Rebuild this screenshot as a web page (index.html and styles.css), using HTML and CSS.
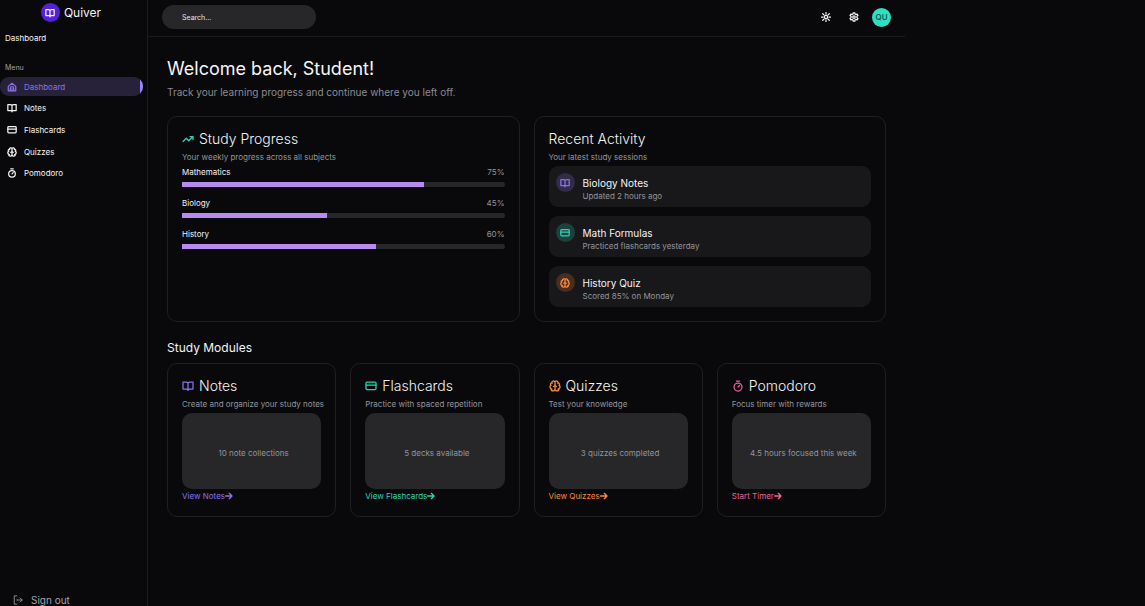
FILE: index.html
```html
<!DOCTYPE html>
<html lang="en">
<head>
<meta charset="utf-8">
<meta name="viewport" content="width=device-width, initial-scale=1">
<title>Quiver</title>
<link rel="stylesheet" href="styles.css">
</head>
<body>
<svg class="sprite" aria-hidden="true">
  <symbol id="book" viewBox="0 0 24 24"><path d="M12 6v15M12 6c-1-1.600-2.500-2-4-2H2v14h7c1.500 0 2.500.8 3 2 .5-1.200 1.500-2 3-2h7V4h-6c-1.500 0-3 .4-4 2z"/></symbol>
  <symbol id="card" viewBox="0 0 24 24"><rect x="2" y="4" width="20" height="15" rx="2"/><path d="M2 10h20"/></symbol>
  <symbol id="brain" viewBox="0 0 24 24"><path d="M12 18V5M15 13a4.170 4.170 0 0 1-3-4 4.170 4.170 0 0 1-3 4M17.600 6.500A3 3 0 1 0 12 5a3 3 0 1 0-5.600 1.500M18 5.125a4 4 0 0 1 2.520 5.770M18 18a4 4 0 0 0 2-7.460M19.970 17.480A4 4 0 1 1 12 18a4 4 0 1 1-7.970-.52M6 18a4 4 0 0 1-2-7.460M6 5.125a4 4 0 0 0-2.520 5.770"/></symbol>
  <symbol id="timer" viewBox="0 0 24 24"><path d="M9 2h6M12 14l3-3"/><circle cx="12" cy="14" r="8"/></symbol>
  <symbol id="home" viewBox="0 0 24 24"><path d="M3 10.500 12 3l9 7.500V21H3zM8 21v-6a4 4 0 0 1 8 0v6M12 16v5"/></symbol>
  <symbol id="trend" viewBox="0 0 24 24"><path d="m2 17 6.500-6.500 5 5L22 7M16 7h6v6"/></symbol>
  <symbol id="arrow" viewBox="0 0 24 24"><path d="M2 12h19M13 4l8 8-8 8"/></symbol>
  <symbol id="exit" viewBox="0 0 24 24"><path d="M9 2H3v20h6M9 12h13M17 7l5 5-5 5"/></symbol>
  <symbol id="sun" viewBox="0 0 24 24"><circle cx="12" cy="12" r="4"/><path d="M12 1v4M12 19v4M1 12h4M19 12h4M4.200 4.200 7 7M17 17l2.800 2.800M4.200 19.800 7 17M17 7l2.800-2.800"/></symbol>
  <symbol id="gear" viewBox="0 0 24 24"><path d="m9.500 5 .5-3h4l.5 3 2 1.200 3-1.200 2 3.500L19 10.500v3l2.500 2-2 3.500-3-1.200-2 1.200-.5 3h-4l-.5-3-2-1.200-3 1.200-2-3.500 2.500-2v-3l-2.500-2 2-3.500 3 1.200z"/><circle cx="12" cy="12" r="3"/></symbol>
</svg>
<div class="app">
  <aside class="sidebar">
    <a class="brand" href="#"><span class="brand-mark"><svg class="icon"><use href="#book"/></svg></span>Quiver</a>
    <p class="page-name">Dashboard</p>
    <p class="menu-label" id="menu-label">Menu</p>
    <nav class="menu" aria-labelledby="menu-label">
      <a class="menu-item active" href="#" aria-current="page"><svg class="icon"><use href="#home"/></svg>Dashboard</a>
      <a class="menu-item" href="#"><svg class="icon"><use href="#book"/></svg>Notes</a>
      <a class="menu-item" href="#"><svg class="icon"><use href="#card"/></svg>Flashcards</a>
      <a class="menu-item" href="#"><svg class="icon"><use href="#brain"/></svg>Quizzes</a>
      <a class="menu-item" href="#"><svg class="icon"><use href="#timer"/></svg>Pomodoro</a>
    </nav>
    <button class="sign-out" type="button"><svg class="icon"><use href="#exit"/></svg>Sign out</button>
  </aside>
  <div class="page">
    <header class="topbar">
      <input class="search" type="search" placeholder="Search..." aria-label="Search">
      <div class="actions">
        <button class="tool" type="button" aria-label="Toggle theme"><svg class="icon"><use href="#sun"/></svg></button>
        <button class="tool" type="button" aria-label="Settings"><svg class="icon"><use href="#gear"/></svg></button>
        <button class="avatar" type="button">QU</button>
      </div>
    </header>
    <main class="content">
      <h1 class="welcome">Welcome back, Student!</h1>
      <p class="lead">Track your learning progress and continue where you left off.</p>
      <div class="overview">
        <section class="card">
          <h2 class="card-title"><svg class="icon teal"><use href="#trend"/></svg>Study Progress</h2>
          <p class="card-note">Your weekly progress across all subjects</p>
          <div class="subject"><span>Mathematics</span><span class="percent">75%</span><div class="track" role="progressbar" aria-label="Mathematics" aria-valuenow="75"><div class="fill" style="width:75%"></div></div></div>
          <div class="subject"><span>Biology</span><span class="percent">45%</span><div class="track" role="progressbar" aria-label="Biology" aria-valuenow="45"><div class="fill" style="width:45%"></div></div></div>
          <div class="subject"><span>History</span><span class="percent">60%</span><div class="track" role="progressbar" aria-label="History" aria-valuenow="60"><div class="fill" style="width:60%"></div></div></div>
        </section>
        <section class="card">
          <h2 class="card-title">Recent Activity</h2>
          <p class="card-note">Your latest study sessions</p>
          <ul class="activity">
            <li class="session"><span class="badge violet"><svg class="icon"><use href="#book"/></svg></span><div><h3 class="session-title">Biology Notes</h3><p class="session-note">Updated 2 hours ago</p></div></li>
            <li class="session"><span class="badge teal"><svg class="icon"><use href="#card"/></svg></span><div><h3 class="session-title">Math Formulas</h3><p class="session-note">Practiced flashcards yesterday</p></div></li>
            <li class="session"><span class="badge orange"><svg class="icon"><use href="#brain"/></svg></span><div><h3 class="session-title">History Quiz</h3><p class="session-note">Scored 85% on Monday</p></div></li>
          </ul>
        </section>
      </div>
      <h2 class="section-title">Study Modules</h2>
      <div class="modules">
        <section class="card">
          <h3 class="card-title"><svg class="icon violet"><use href="#book"/></svg>Notes</h3>
          <p class="card-note">Create and organize your study notes</p>
          <div class="summary">10 note collections</div>
          <a class="more violet" href="#">View Notes<svg class="icon"><use href="#arrow"/></svg></a>
        </section>
        <section class="card">
          <h3 class="card-title"><svg class="icon teal"><use href="#card"/></svg>Flashcards</h3>
          <p class="card-note">Practice with spaced repetition</p>
          <div class="summary">5 decks available</div>
          <a class="more teal" href="#">View Flashcards<svg class="icon"><use href="#arrow"/></svg></a>
        </section>
        <section class="card">
          <h3 class="card-title"><svg class="icon orange"><use href="#brain"/></svg>Quizzes</h3>
          <p class="card-note">Test your knowledge</p>
          <div class="summary">3 quizzes completed</div>
          <a class="more orange" href="#">View Quizzes<svg class="icon"><use href="#arrow"/></svg></a>
        </section>
        <section class="card">
          <h3 class="card-title"><svg class="icon pink"><use href="#timer"/></svg>Pomodoro</h3>
          <p class="card-note">Focus timer with rewards</p>
          <div class="summary">4.5 hours focused this week</div>
          <a class="more pink" href="#">Start Timer<svg class="icon"><use href="#arrow"/></svg></a>
        </section>
      </div>
    </main>
  </div>
</div>
</body>
</html>
```
FILE: styles.css
```css
* { box-sizing: border-box; margin: 0; padding: 0; }
body { background: #09090b; color: #f4f4f5; font: 400 8px/12px Inter, sans-serif; }
h1, h2, h3 { font-weight: 400; }
a { color: inherit; text-decoration: none; }
button { border: 0; background: none; color: inherit; font: inherit; cursor: pointer; }
ul { list-style: none; }
.sprite { display: none; }
.icon { width: 10px; height: 10px; flex: none; fill: none; stroke: currentColor; stroke-width: 3; stroke-linecap: round; stroke-linejoin: round; }
.violet { color: #8b72e8; }
.teal { color: #2dd4b4; }
.orange { color: #fb8a3c; }
.pink { color: #ee5f96; }

.app { display: grid; grid-template-columns: 148px minmax(0, 757fr) 240fr; min-height: 100vh; }
.sidebar { display: flex; flex-direction: column; border-right: 1px solid #1c1c1f; padding-top: 3px; }
.brand { display: flex; align-items: center; justify-content: center; gap: 4px; height: 19px; padding-right: 5px; font-size: 12px; }
.brand-mark { display: grid; place-items: center; width: 19px; height: 19px; border-radius: 50%; background: #5521d6; }
.page-name { padding: 10px 5px 0; }
.menu-label { padding: 18px 5px 0; font-size: 7px; color: #a1a1aa; }
.menu { display: grid; grid-template-rows: repeat(5, 1fr); gap: 3px; height: 105px; margin: 3px 4px 0 0; }
.menu-item { display: flex; align-items: center; gap: 7px; padding: 1px 0 0 7px; border-radius: 9px; }
.menu-item.active { color: #8b72e8; background: linear-gradient(#9a84f5, #9a84f5) right / 3px 100% no-repeat #272239; }
.sign-out { display: flex; align-items: center; gap: 8px; margin-top: auto; padding: 0 13px; font-size: 10px; color: #a1a1aa; }
.sign-out .icon { stroke-width: 2; }

.topbar { display: flex; align-items: center; justify-content: space-between; height: 37px; padding: 0 14px 2px; border-bottom: 1px solid #1c1c1f; }
.search { width: 154px; height: 24px; border: 0; border-radius: 12px; padding: 0 20px; background: #27272a; color: #f4f4f5; font: 7px/12px Inter, sans-serif; outline: none; }
.search::placeholder { color: #e4e4e7; opacity: 1; }
.actions { display: flex; align-items: center; }
.tool { display: grid; place-items: center; width: 28px; height: 20px; }
.avatar { width: 19px; height: 19px; margin-left: 4px; border-radius: 50%; background: #2ee0c1; color: #115e54; font-size: 8px; font-weight: 600; }

.content { padding: 20px 19px; }
.welcome { font-size: 18px; line-height: 24px; }
.lead { margin-top: 5px; font-size: 10px; color: #8b8b93; }
.overview { display: grid; grid-template-columns: repeat(2, minmax(0, 1fr)); gap: 14px; margin-top: 18px; }
.modules { display: grid; grid-template-columns: repeat(4, minmax(0, 1fr)); gap: 14px; margin-top: 7px; }
.card { min-width: 0; padding: 14px; border: 1px solid #1f1f22; border-radius: 10px; }
.card-title { display: flex; align-items: center; gap: 5px; font-size: 14px; font-weight: 300; line-height: 16px; }
.card-title .icon { width: 12px; height: 12px; stroke-width: 2.5; }
.card-note { margin-top: 4px; color: #94949c; white-space: nowrap; }
.subject { display: grid; grid-template-columns: 1fr auto; row-gap: 4px; margin: 3px 0 10px; }
.subject + .subject { margin-top: 0; }
.percent { color: #94949c; }
.track { grid-column: 1 / -1; height: 5px; border-radius: 0 3px 3px 0; background: #27272a; }
.fill { height: 100%; background: #b78af0; }
.activity { display: grid; gap: 9px; margin-top: 3px; }
.session { display: flex; gap: 8px; padding: 7px 7px 5px; border-radius: 9px; background: #18181b; }
.badge { display: grid; place-items: center; width: 19px; height: 19px; border-radius: 50%; }
.badge.violet { background: #322c4b; }
.badge.teal { background: #1c403c; }
.badge.orange { background: #472e20; }
.session-title { margin-top: 4px; font-size: 10px; line-height: 13px; }
.session-note { color: #94949c; }
.section-title { margin-top: 18px; font-size: 12px; line-height: 16px; }
.summary { height: 76px; margin-top: 3px; padding: 0 14px 0 18px; border-radius: 10px; background: #27272a; color: #94949c; line-height: 80px; text-align: center; white-space: nowrap; }
.more { display: flex; align-items: center; margin-top: 1px; }
.more .icon { width: 8px; height: 8px; stroke-width: 4; }
```
